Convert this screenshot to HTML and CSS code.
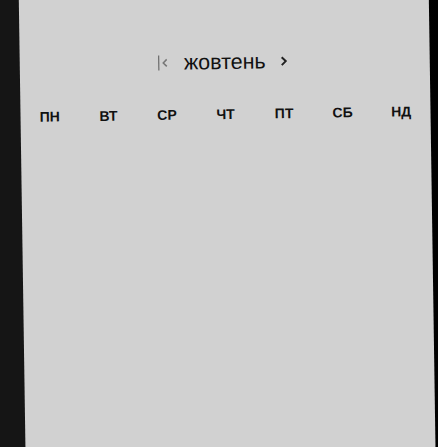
FILE: index.html
```html
<!DOCTYPE html>
<html lang="uk">
<head>
<meta charset="utf-8">
<link rel="stylesheet" href="styles.css">
</head>
<body>
<div class="stage">
  <div class="panel">
    <div class="header">
      <button class="nav nav-first" aria-label="на початок">
        <svg width="12" height="16" viewBox="0 0 12 16"><line x1="1" y1="0.5" x2="1" y2="15.5" stroke="#6a6a6a" stroke-width="1.2"/><polyline points="9,4.5 5.5,8 9,11.5" fill="none" stroke="#777" stroke-width="1.5"/></svg>
      </button>
      <div class="month">жовтень</div>
      <button class="nav nav-next" aria-label="наступний">
        <svg width="10" height="12" viewBox="0 0 10 12"><polyline points="2,2 6,6 2,10" fill="none" stroke="#222" stroke-width="2"/></svg>
      </button>
    </div>
    <div class="weekdays">
      <div class="wd">ПН</div>
      <div class="wd">ВТ</div>
      <div class="wd">СР</div>
      <div class="wd">ЧТ</div>
      <div class="wd">ПТ</div>
      <div class="wd">СБ</div>
      <div class="wd">НД</div>
    </div>
  </div>
</div>
</body>
</html>
```

FILE: styles.css
```css
html, body {
  margin: 0;
  padding: 0;
  width: 438px;
  height: 447px;
  overflow: hidden;
}
body {
  background: linear-gradient(to right, #151515 0, #151515 50%, #000 100%);
  font-family: "Liberation Sans", Arial, sans-serif;
}
.stage {
  height: 447px;
  padding-left: 22px;
  overflow: hidden;
}
.panel {
  width: 410px;
  height: 500px;
  margin-top: -36px;
  background: #d1d1d1;
  transform: rotate(-0.85deg);
  padding-top: 86px;
  box-sizing: border-box;
}
.header {
  display: flex;
  align-items: center;
  justify-content: center;
  gap: 14px;
  height: 24px;
  padding-right: 2px;
}
.nav {
  background: none;
  border: 0;
  padding: 0;
  display: flex;
  align-items: center;
  cursor: pointer;
}
.month {
  font-size: 21.5px;
  color: #111;
}
.weekdays {
  display: grid;
  grid-template-columns: repeat(7, 1fr);
  margin-top: 32px;
}
.wd {
  text-align: center;
  font-size: 14px;
  font-weight: bold;
  color: #111;
  line-height: 17px;
}
```
